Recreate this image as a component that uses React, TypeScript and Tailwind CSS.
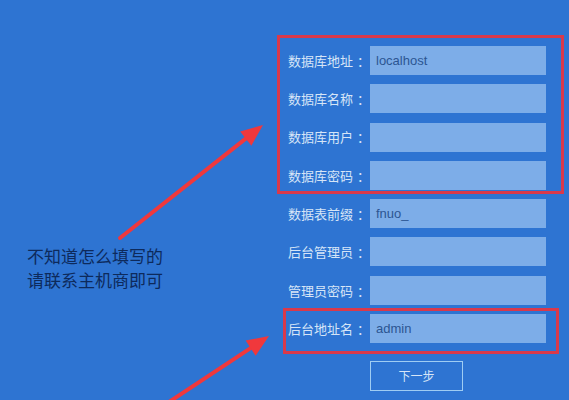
import React from 'react';

const fields = [
  { label: '数据库地址', value: 'localhost' },
  { label: '数据库名称', value: '' },
  { label: '数据库用户', value: '' },
  { label: '数据库密码', value: '' },
  { label: '数据表前缀', value: 'fnuo_' },
  { label: '后台管理员', value: '' },
  { label: '管理员密码', value: '' },
  { label: '后台地址名', value: 'admin' },
];

function Arrow({ x1, y1, x2, y2 }: { x1: number; y1: number; x2: number; y2: number }) {
  const dx = x2 - x1;
  const dy = y2 - y1;
  const len = Math.sqrt(dx * dx + dy * dy);
  const ux = dx / len;
  const uy = dy / len;
  const headLen = 22;
  const headW = 9;
  const bx = x2 - ux * headLen;
  const by = y2 - uy * headLen;
  const px = -uy;
  const py = ux;
  const pts = `${x2},${y2} ${bx + px * headW},${by + py * headW} ${bx - px * headW},${by - py * headW}`;
  return (
    <g>
      <line x1={x1} y1={y1} x2={bx + ux * 4} y2={by + uy * 4} stroke="#f0383c" strokeWidth={4} strokeLinecap="round" />
      <polygon points={pts} fill="#f0383c" />
    </g>
  );
}

export default function App() {
  return (
    <div
      className="relative w-[569px] h-[400px] overflow-hidden bg-[#2e74d2]"
      style={{ fontFamily: '"Noto Sans CJK SC", "Liberation Sans", sans-serif' }}
    >
      <div className="flex h-full">
        {/* left note */}
        <div className="w-[288px] pl-[27px] pt-[244px]">
          <p className="text-[17px] leading-[24px] text-[#0d2a5c]">
            不知道怎么填写的
            <br />
            请联系主机商即可
          </p>
        </div>

        {/* form */}
        <div className="flex flex-col pt-[46px]">
          <div className="flex flex-col gap-[9.3px]">
            {fields.map((f) => (
              <div key={f.label} className="flex items-center h-[29px]">
                <span className="w-[82px] text-[13px] text-[#d6e5f7] whitespace-nowrap">
                  {f.label}
                  <span className="ml-[4px]">：</span>
                </span>
                <div className="w-[176px] h-[29px] bg-[#7dade8] flex items-center px-[6px] text-[13px] text-[#2c5592]" style={{ fontFamily: '"Liberation Sans", sans-serif' }}>
                  {f.value}
                </div>
              </div>
            ))}
          </div>
          <div className="mt-[18px] ml-[82px]">
            <button className="w-[93px] h-[30px] border border-[#9fcdf3] text-[12px] text-[#d6e5f7] bg-transparent">
              下一步
            </button>
          </div>
        </div>
      </div>

      {/* annotation boxes */}
      <div className="absolute left-[277px] top-[35px] w-[287px] h-[159px] border-[3px] border-[#d9394b]" />
      <div className="absolute left-[283px] top-[308px] w-[276px] h-[46px] border-[3px] border-[#d9394b]" />

      {/* annotation arrows */}
      <svg className="absolute inset-0 pointer-events-none" width={569} height={400}>
        <Arrow x1={120} y1={238} x2={263} y2={125} />
        <Arrow x1={166} y1={404} x2={269} y2={336} />
      </svg>
    </div>
  );
}
